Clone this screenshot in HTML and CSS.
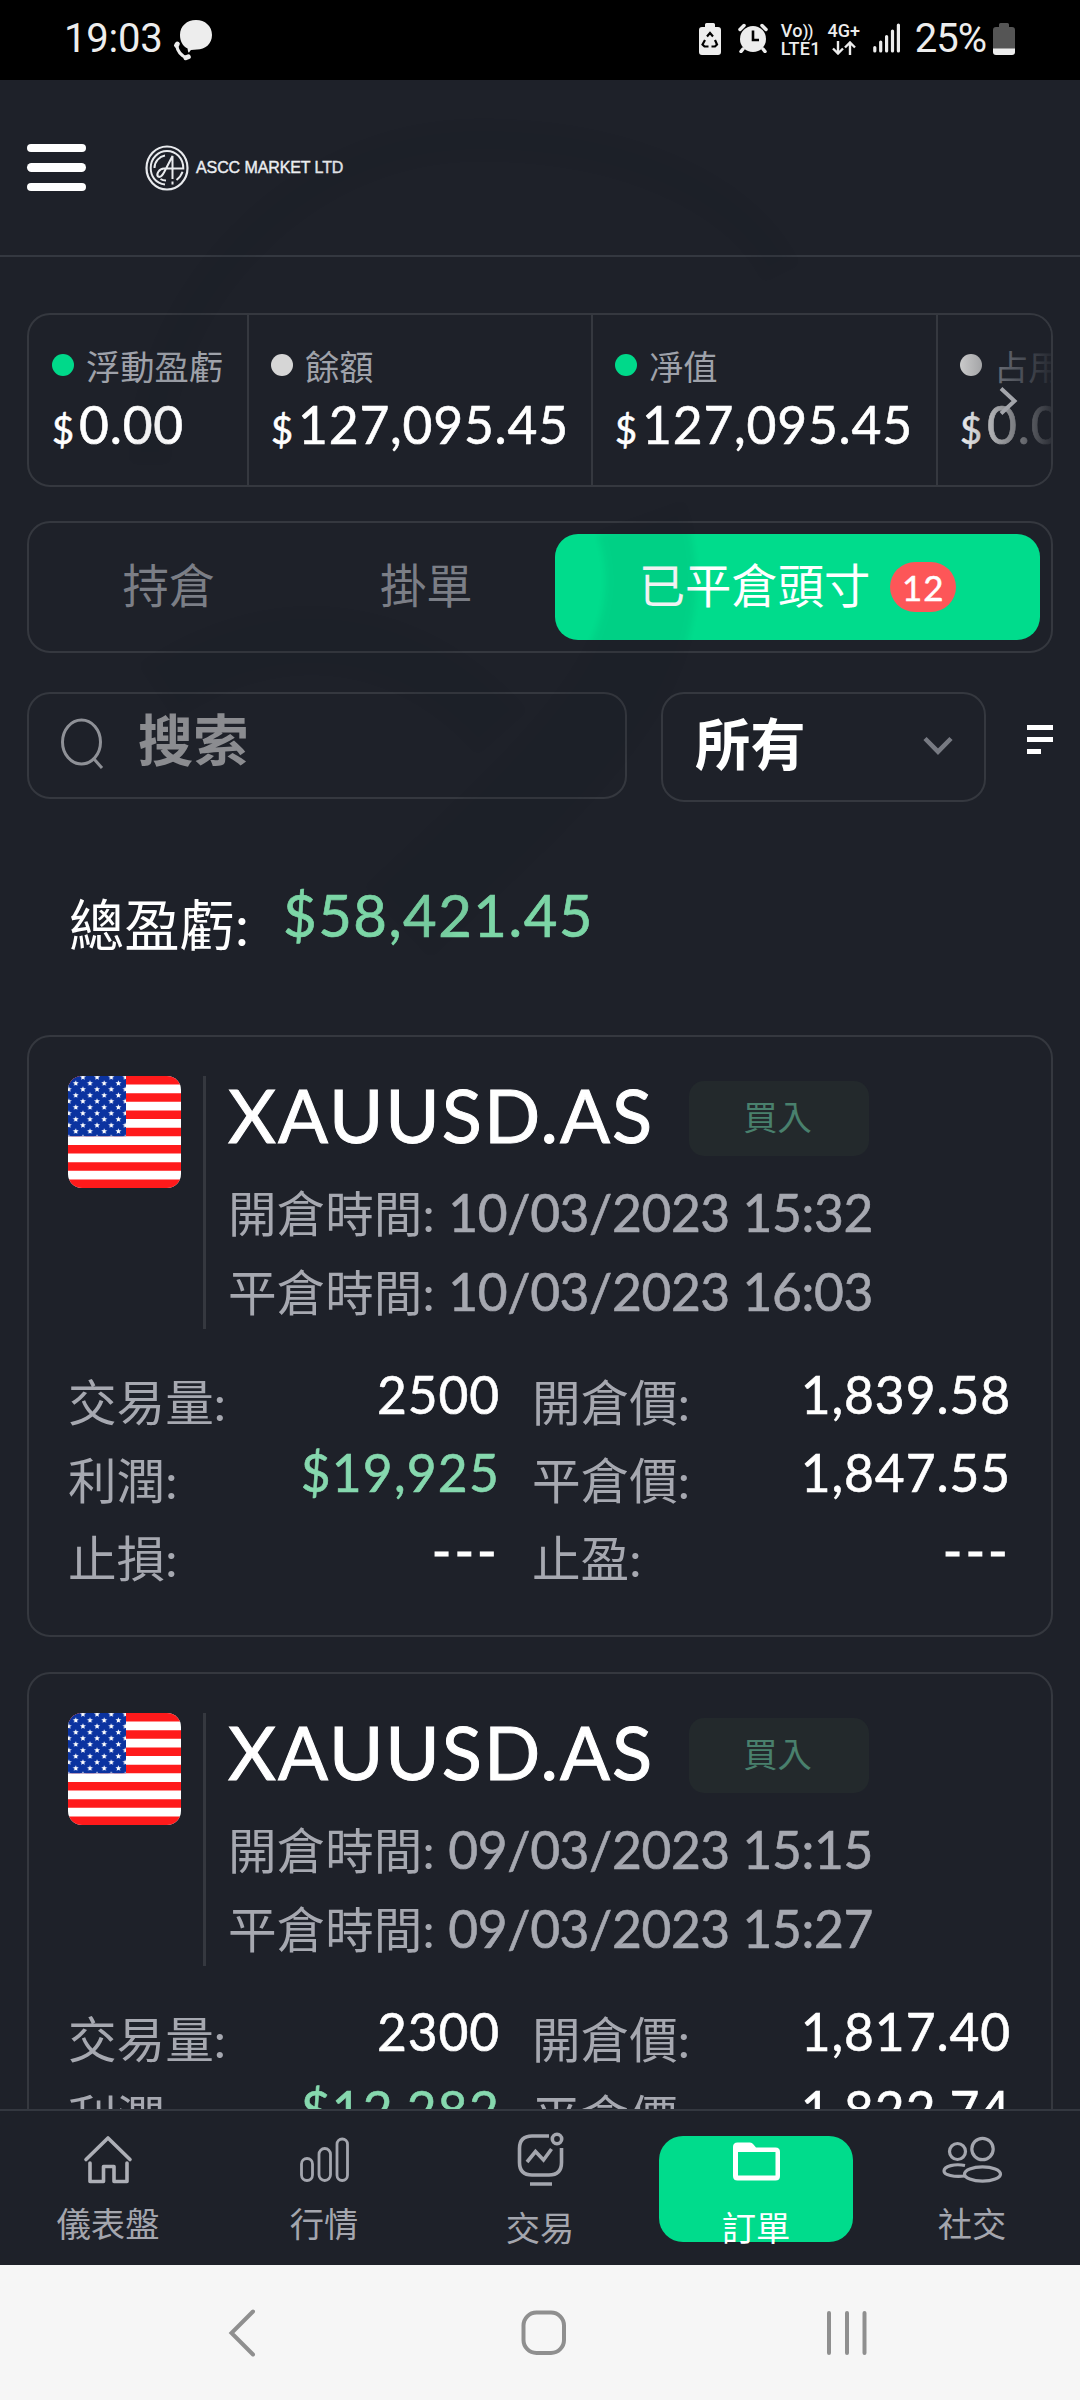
FILE: index.html
```html
<!DOCTYPE html>
<html lang="zh-Hant">
<head>
<meta charset="utf-8">
<title>ASCC MARKET LTD</title>
<link rel="stylesheet" href="styles.css">
</head>
<body>
<svg class="defs" width="0" height="0">
  <defs>
    <pattern id="stars" width="14.2" height="12" patternUnits="userSpaceOnUse" x="0.7" y="1">
      <path fill="#fff" d="M7.1 3.2l.8 2 2.1.1-1.6 1.4.5 2.1-1.8-1.1-1.8 1.1.5-2.1-1.6-1.4 2.1-.1z"/>
      <path fill="#fff" transform="translate(-7.1 6)" d="M7.1 3.2l.8 2 2.1.1-1.6 1.4.5 2.1-1.8-1.1-1.8 1.1.5-2.1-1.6-1.4 2.1-.1z"/>
      <path fill="#fff" transform="translate(7.1 6)" d="M7.1 3.2l.8 2 2.1.1-1.6 1.4.5 2.1-1.8-1.1-1.8 1.1.5-2.1-1.6-1.4 2.1-.1z"/>
      <path fill="#fff" transform="translate(-7.1 -6)" d="M7.1 3.2l.8 2 2.1.1-1.6 1.4.5 2.1-1.8-1.1-1.8 1.1.5-2.1-1.6-1.4 2.1-.1z"/>
      <path fill="#fff" transform="translate(7.1 -6)" d="M7.1 3.2l.8 2 2.1.1-1.6 1.4.5 2.1-1.8-1.1-1.8 1.1.5-2.1-1.6-1.4 2.1-.1z"/>
    </pattern>
    <symbol id="us-flag" viewBox="0 0 113 112">
      <rect width="113" height="112" fill="#fff"/>
      <path stroke="#ff1a1b" stroke-width="8.62" d="M0 4.3h113M0 21.5h113M0 38.8h113M0 56h113M0 73.2h113M0 90.5h113M0 107.7h113"/>
      <rect width="58" height="60.3" fill="#0b33a0"/>
      <rect width="58" height="60.3" fill="url(#stars)"/>
    </symbol>
  </defs>
</svg>

<div class="screen">
  <div class="status">
    <span class="clock">19:03</span>
    <svg class="chat" width="40" height="42" viewBox="0 0 40 42"><path fill="#ededed" d="M23 1C32 1 39 7 39 16s-7 14.500-15 14.500l-6 .4c-1.500 1.600-2 2.600-2.200 2.600-.6 0-1-2-1.200-4C9.500 27 7 22 7 16 7 7 14 1 23 1z"/><path fill="none" stroke="#ededed" stroke-width="3.200" d="M3.500 26c1 6 5 11 10.500 13"/><path stroke="#ededed" stroke-width="4.800" stroke-linecap="round" d="M3.400 26.400l1-1.400M12.800 38.800l2.600-1"/></svg>
    <div class="status-right">
      <svg width="22" height="32" viewBox="0 0 22 32"><path fill="#ededed" d="M6 1.500Q6 0 7.500 0h7Q16 0 16 1.500V4h3q3 0 3 3v22q0 3-3 3H3q-3 0-3-3V7q0-3 3-3h3z"/><path fill="none" stroke="#000" stroke-width="2.200" d="M8 13.500l3-3.500 3 3.500M16 17l2 4.500-2 2h-3.500M9.500 23.500H5.500l-2-2L6 17"/></svg>
      <svg class="alarm" width="30" height="30" viewBox="0 0 30 30"><circle cx="15" cy="16" r="13" fill="#ededed"/><path stroke="#ededed" stroke-width="3.500" stroke-linecap="round" d="M2 6.500l4-4M28 6.500l-4-4M5 26l-2 2.500M25 26l2 2.500"/><path fill="none" stroke="#000" stroke-width="2.600" d="M15 7.500V17h6"/></svg>
      <div class="net volte"><span>Vo<i>))</i></span><span>LTE1</span></div>
      <div class="net lte"><span>4G+</span><svg width="24" height="14" viewBox="0 0 24 14"><path fill="none" stroke="#ededed" stroke-width="2.400" d="M6 0v12.500M1 7.500l5 5 5-5M18 14V1.500M13 6.500l5-5 5 5"/></svg></div>
      <svg class="signal" width="28" height="30" viewBox="0 0 28 30"><path stroke="#ededed" stroke-width="3.200" stroke-linecap="round" d="M1.800 24.500v3.500M7.700 19v9M13.600 13.500V28M19.500 8V28M25.400 2V28"/></svg>
      <span class="percent">25%</span>
      <svg width="22" height="32" viewBox="0 0 22 32"><path fill="#555" d="M6 1.500Q6 0 7.500 0h7Q16 0 16 1.500V4h3q3 0 3 3v19H0V7q0-3 3-3h3z"/><path fill="#ededed" d="M0 25.500h22V29q0 3-3 3H3q-3 0-3-3z"/></svg>
    </div>
  </div>

  <header class="header">
    <div class="burger"><i></i><i></i><i></i></div>
    <div class="brand">
      <svg width="44" height="46" viewBox="0 0 44 46"><g fill="none" stroke="#e9ebee"><ellipse cx="22" cy="23" rx="20.500" ry="21.500" stroke-width="2.200"/><path stroke-width="2" d="M20 39.500C10.500 38.500 5.700 31 5.700 23 5.700 13 13.500 6 22 6c8.800 0 16.300 7 16.300 17.500H19c-5 0-8 6-6 8 2.600 1.500 5-2 6.500-5L27.500 11V34M9.500 23c0-6.500 5-11.500 10.500-12.500M31.500 35c3-2.300 5-5 6-8.200M21 35.500c-2 0-4-.5-5.500-1.500M27.500 36.500v3"/></g></svg>
      <span>ASCC MARKET LTD</span>
    </div>
  </header>

  <main class="content">
    <section class="stats">
      <div class="stat s1"><div class="stat-label"><i class="dot green"></i>浮動盈虧</div><div class="stat-value"><small>$</small>0.00</div></div>
      <div class="stat s2"><div class="stat-label"><i class="dot"></i>餘額</div><div class="stat-value"><small>$</small>127,095.45</div></div>
      <div class="stat s3"><div class="stat-label"><i class="dot green"></i>凈值</div><div class="stat-value"><small>$</small>127,095.45</div></div>
      <div class="stat s4"><div class="stat-label"><i class="dot"></i>占用</div><div class="stat-value"><small>$</small>0.00</div></div>
      <div class="fade"><svg width="20" height="30" viewBox="0 0 20 30"><path fill="none" stroke="#a3a5ab" stroke-width="4" d="M2 2.500l13.500 12.500L2 27.500"/></svg></div>
    </section>

    <nav class="tabs">
      <div class="tab">持倉</div>
      <div class="tab">掛單</div>
      <div class="tab active">已平倉頭寸<b class="count">12</b></div>
    </nav>

    <div class="filters">
      <div class="search">
        <svg width="44" height="52" viewBox="0 0 44 52"><g fill="none" stroke="#8f9197" stroke-width="3"><ellipse cx="20.500" cy="24" rx="19" ry="22"/><path d="M33 41l8 9"/></g></svg>
        <span>搜索</span>
      </div>
      <div class="select"><span>所有</span><svg width="30" height="20" viewBox="0 0 30 20"><path fill="none" stroke="#777a82" stroke-width="4.500" d="M2 2.500l13 13.200 13-13.200"/></svg></div>
      <div class="sort"><i></i><i></i><i></i></div>
    </div>

    <div class="total"><span class="total-label">總盈虧:</span><span class="total-value">$58,421.45</span></div>

    <article class="card">
      <div class="card-head">
        <svg class="flag"><use href="#us-flag"/></svg>
        <div class="info">
          <div class="title"><h2>XAUUSD.AS</h2><span class="side">買入</span></div>
          <p><span>開倉時間:</span> 10/03/2023 15:32</p>
          <p><span>平倉時間:</span> 10/03/2023 16:03</p>
        </div>
      </div>
      <div class="grid">
        <span class="k">交易量:</span><span class="v">2500</span><span class="k">開倉價:</span><span class="v">1,839.58</span>
        <span class="k">利潤:</span><span class="v gain">$19,925</span><span class="k">平倉價:</span><span class="v">1,847.55</span>
        <span class="k">止損:</span><span class="v none">---</span><span class="k">止盈:</span><span class="v none">---</span>
      </div>
    </article>

    <article class="card">
      <div class="card-head">
        <svg class="flag"><use href="#us-flag"/></svg>
        <div class="info">
          <div class="title"><h2>XAUUSD.AS</h2><span class="side">買入</span></div>
          <p><span>開倉時間:</span> 09/03/2023 15:15</p>
          <p><span>平倉時間:</span> 09/03/2023 15:27</p>
        </div>
      </div>
      <div class="grid">
        <span class="k">交易量:</span><span class="v">2300</span><span class="k">開倉價:</span><span class="v">1,817.40</span>
        <span class="k">利潤:</span><span class="v gain">$12,282</span><span class="k">平倉價:</span><span class="v">1,822.74</span>
      </div>
    </article>
  </main>

  <nav class="bottom">
    <div class="item"><svg width="60" height="58" viewBox="0 0 60 58"><path fill="none" stroke="#adafb6" stroke-width="3.600" stroke-linejoin="round" stroke-linecap="round" d="M8 27.500L30 6l22 21.500M12 31v18.500h13.500V34.500h10.500v15h13V31"/></svg><span>儀表盤</span></div>
    <div class="item"><svg width="60" height="58" viewBox="0 0 60 58"><g fill="none" stroke="#a4a6ae" stroke-width="2.800"><rect x="7.500" y="26.500" width="11" height="22" rx="5.500"/><rect x="25" y="16.500" width="11.500" height="32" rx="5.700"/><rect x="43" y="7" width="10.500" height="41.500" rx="5.200"/></g></svg><span>行情</span></div>
    <div class="item low"><svg width="60" height="58" viewBox="0 0 60 58"><g fill="none" stroke="#a4a6ae" stroke-width="3.600"><path d="M39 4H22Q9.500 4 9.500 16.500v14Q9.500 43 22 43h17Q51.500 43 51.500 30.500V16M20 52h22"/><circle cx="47" cy="7" r="4.700"/><path d="M17 30l8.500-10.500 8 8.500L41.500 17"/></g></svg><span>交易</span></div>
    <div class="item low active"><svg width="60" height="58" viewBox="0 0 60 58"><path fill="#fff" fill-rule="evenodd" d="M7 12q0-4.500 4.500-4.500H24q2 0 3.500 2l2.500 3h19.500q4.500 0 4.500 4.500v24q0 4.500-4.500 4.500h-38Q7 45.500 7 41zM12 17v23.500h37.500V17z"/></svg><span>訂單</span></div>
    <div class="item"><svg width="64" height="58" viewBox="0 0 64 58"><g fill="none" stroke="#a4a6ae" stroke-width="3.200"><circle cx="17.500" cy="19.500" r="8"/><ellipse cx="42.500" cy="17" rx="10.700" ry="10.700"/><ellipse cx="42.500" cy="42" rx="18" ry="7.200"/><path d="M25 33.500C15 31.500 4 34 4 39c0 4 10 6.500 21 5"/></g></svg><span>社交</span></div>
  </nav>

  <div class="system">
    <svg width="28" height="48" viewBox="0 0 28 48"><path fill="none" stroke="#8f8f8f" stroke-width="4" stroke-linecap="round" d="M25 2.500L3.500 24 25 45.500"/></svg>
    <svg class="home" width="46" height="46" viewBox="0 0 46 46"><rect x="2.500" y="2.500" width="40.500" height="40.500" rx="13" fill="none" stroke="#8f8f8f" stroke-width="4"/></svg>
    <svg class="recents" width="42" height="46" viewBox="0 0 42 46"><path stroke="#8f8f8f" stroke-width="4" stroke-linecap="round" d="M3 3v40M21 3v40M38.500 3v40"/></svg>
  </div>

  <svg class="watermark" width="1080" height="900" viewBox="0 0 1080 900"><g fill="none" stroke="#0b1018"><path stroke-width="34" d="M150 380C150 230 290 60 480 60c140 0 260 50 300 130"/><path stroke-width="90" d="M640 440C690 580 560 690 400 840"/><path stroke-width="60" d="M160 610c120-80 250-60 340 40"/></g></svg>
</div>
</body>
</html>
```
FILE: styles.css
```css
* { box-sizing: border-box; }
body { margin: 0; background: #1e2129; font-family: Lato, "Noto Sans CJK TC", sans-serif; color: #fff; }
i { font-style: normal; }
svg { display: block; flex: none; }
.defs { position: absolute; }
.screen { position: relative; width: 1080px; height: 2400px; display: flex; flex-direction: column; overflow: hidden; }
.watermark { position: absolute; left: 0; top: 80px; opacity: .05; filter: blur(3px); pointer-events: none; }

/* Phone status bar */
.status { flex: none; height: 80px; background: #000; color: #ededed; display: flex; align-items: flex-start; padding: 0 65px 0 64px; font-family: Roboto, sans-serif; }
.clock, .percent { font-size: 40px; line-height: 48px; padding-top: 15px; }
.clock { letter-spacing: -.2px; }
.chat { margin: 19px 0 0 10px; }
.status-right { margin-left: auto; display: flex; align-items: flex-start; padding-top: 23px; }
.alarm { margin-left: 17px; }
.net { display: flex; flex-direction: column; font-size: 18px; font-weight: 500; line-height: 17px; margin-top: -1px; white-space: nowrap; }
.volte { width: 38px; margin-left: 13px; letter-spacing: .3px; }
.volte i { font-size: 16px; letter-spacing: -.5px; }
.lte { width: 34px; margin-left: 8px; align-items: center; gap: 2px; }
.signal { margin-left: 12px; }
.percent { padding-top: 0; margin: -8px 7px 0 14px; letter-spacing: -1px; }

.header { flex: none; height: 177px; border-bottom: 2px solid #343840; display: flex; align-items: center; padding: 0 0 0 27px; }
.burger { width: 59px; display: flex; flex-direction: column; gap: 11px; }
.burger i { height: 8.500px; border-radius: 5px; background: #fff; }
.brand { margin-left: 59px; display: flex; align-items: center; gap: 7px; font: 16px "Liberation Sans", sans-serif; color: #eceef1; letter-spacing: -.1px; -webkit-text-stroke: .4px #eceef1; }

.content { flex: 1; min-height: 0; overflow: hidden; padding: 56px 27px 0; }

.stats { position: relative; height: 174px; border: 2px solid #35383f; border-radius: 23px; display: flex; overflow: hidden; }
.stat { flex: none; padding: 26px 0 0 22px; border-right: 2px solid #35383f; }
.s1 { width: 220px; padding-left: 23px; }
.s2 { width: 344px; }
.s3 { width: 345px; }
.s4 { width: 300px; }
.stat-label { display: flex; align-items: center; height: 50px; line-height: 50px; font-size: 34.300px; color: #9fa2aa; white-space: nowrap; padding-top: 1px; }
.dot { width: 22px; height: 22px; border-radius: 50%; background: #d6d6d6; margin: -3px 12px 0 0; }
.dot.green { background: #00d98a; }
.stat-value { line-height: 66px; font-size: 51.500px; letter-spacing: .8px; white-space: nowrap; -webkit-text-stroke: .6px; }
.stat-value small { font-size: 38px; margin-right: 5px; letter-spacing: 0; }
.fade { position: absolute; right: -2px; top: -2px; width: 100px; height: 174px; padding: 73px 0 0 46px; background: linear-gradient(90deg, rgba(30,33,41,0), rgba(30,33,41,.95)); }

.tabs { margin-top: 34px; height: 132px; border: 2px solid #35383f; border-radius: 23px; padding: 11px; display: flex; }
.tab { width: 257.500px; height: 106px; line-height: 102px; text-align: center; font-size: 46.300px; color: #7b7e86; }
.tab.active { flex: 1; display: flex; justify-content: center; align-items: flex-start; background: #00dc8c; border-radius: 23px; color: #fff; }
.count { width: 66px; height: 50px; line-height: 50px; margin: 28px 0 0 20px; border-radius: 25px; background: #fd5658; font-size: 35px; font-weight: 400; letter-spacing: 1px; -webkit-text-stroke: .5px; }

.filters { margin-top: 39px; height: 110px; display: flex; align-items: flex-start; }
.search { width: 600px; height: 107px; border: 2px solid #35383f; border-radius: 23px; display: flex; padding: 24px 0 0 32px; color: #8b8c90; }
.search span, .select span { font-size: 55.300px; font-weight: 700; line-height: 60px; }
.search span { margin: -8px 0 0 33px; }
.select { width: 325px; height: 110px; margin-left: 34px; border: 2px solid #35383f; border-radius: 23px; display: flex; align-items: center; justify-content: space-between; padding: 0 31px 2px 32px; }
.select span { padding-bottom: 4px; }
.sort { width: 26px; margin: 33px 0 0 41px; display: flex; flex-direction: column; gap: 7px; }
.sort i { height: 5px; background: #fff; }
.sort i:last-child { width: 14px; }

.total { margin-top: 74px; height: 78px; display: flex; padding-left: 42px; white-space: nowrap; }
.total-label { width: 214px; padding-top: 21px; line-height: 56px; font-size: 55.300px; }
.total-value { line-height: 78px; font-size: 58px; letter-spacing: 1.500px; color: #7cd6a6; -webkit-text-stroke: .7px; }

.card { margin: 81px 0 0; height: 602px; border: 2px solid #35383f; border-radius: 23px; padding: 39px; }
.card + .card { margin-top: 35px; }
.card-head { display: flex; height: 253px; }
.flag { width: 113px; height: 112px; border-radius: 14px; margin-right: 22px; }
.info { flex: 1; border-left: 3px solid #35383f; padding-left: 22px; }
.title { display: flex; align-items: flex-start; height: 97px; }
.title h2 { margin: 0; width: 461px; font-size: 74px; font-weight: 400; line-height: 77px; letter-spacing: 2px; -webkit-text-stroke: 1px; }
.side { width: 180px; height: 75px; margin-top: 5px; border-radius: 15px; background: #23292c; color: #49806d; text-align: center; font-size: 34.300px; line-height: 71px; padding-right: 3px; }
.info p { margin: 0; line-height: 78px; font-size: 51.500px; letter-spacing: -.4px; color: #a6a8b0; white-space: nowrap; -webkit-text-stroke: .6px; }
.info p span { font-size: 48.600px; letter-spacing: 0; -webkit-text-stroke: 0; margin-right: 1px; }
.grid { margin-top: 25px; display: grid; grid-template-columns: 192px 240px 212px 300px; grid-auto-rows: 78px; white-space: nowrap; }
.k { padding-top: 18px; line-height: 60px; font-size: 48.600px; color: #a6a8b0; }
.v { text-align: right; line-height: 80px; font-size: 51.500px; letter-spacing: .9px; -webkit-text-stroke: .6px; }
.k:nth-child(4n+3) { padding-left: 32px; }
.v:nth-child(4n) { padding-right: 1px; }
.gain { color: #86d8ae; letter-spacing: 1.200px; }
.none { letter-spacing: 3.500px; -webkit-text-stroke: 1.200px; }

.bottom { flex: none; height: 156px; border-top: 2px solid #343840; background: #1e2129; display: grid; grid-template-columns: repeat(5, 1fr); }
.item { display: flex; flex-direction: column; align-items: center; padding-top: 21px; font-size: 34.300px; line-height: 50px; color: #a4a6ae; }
.item span { margin-top: 9px; }
.item.low span { margin-top: 13px; }
.item.active { width: 194px; height: 106px; margin: 25px 0 0 11px; padding-top: 0; background: #00dc8c; border-radius: 24px; color: #fff; }
.item.active svg { margin-top: -1px; }
.item.active span { margin-top: 10px; }

.system { flex: none; height: 135px; background: #f6f6f6; display: flex; align-items: flex-start; padding: 44px 0 0 228px; }
.home { margin: 1px 0 0 265px; }
.recents { margin: 1px 0 0 259px; }
```
